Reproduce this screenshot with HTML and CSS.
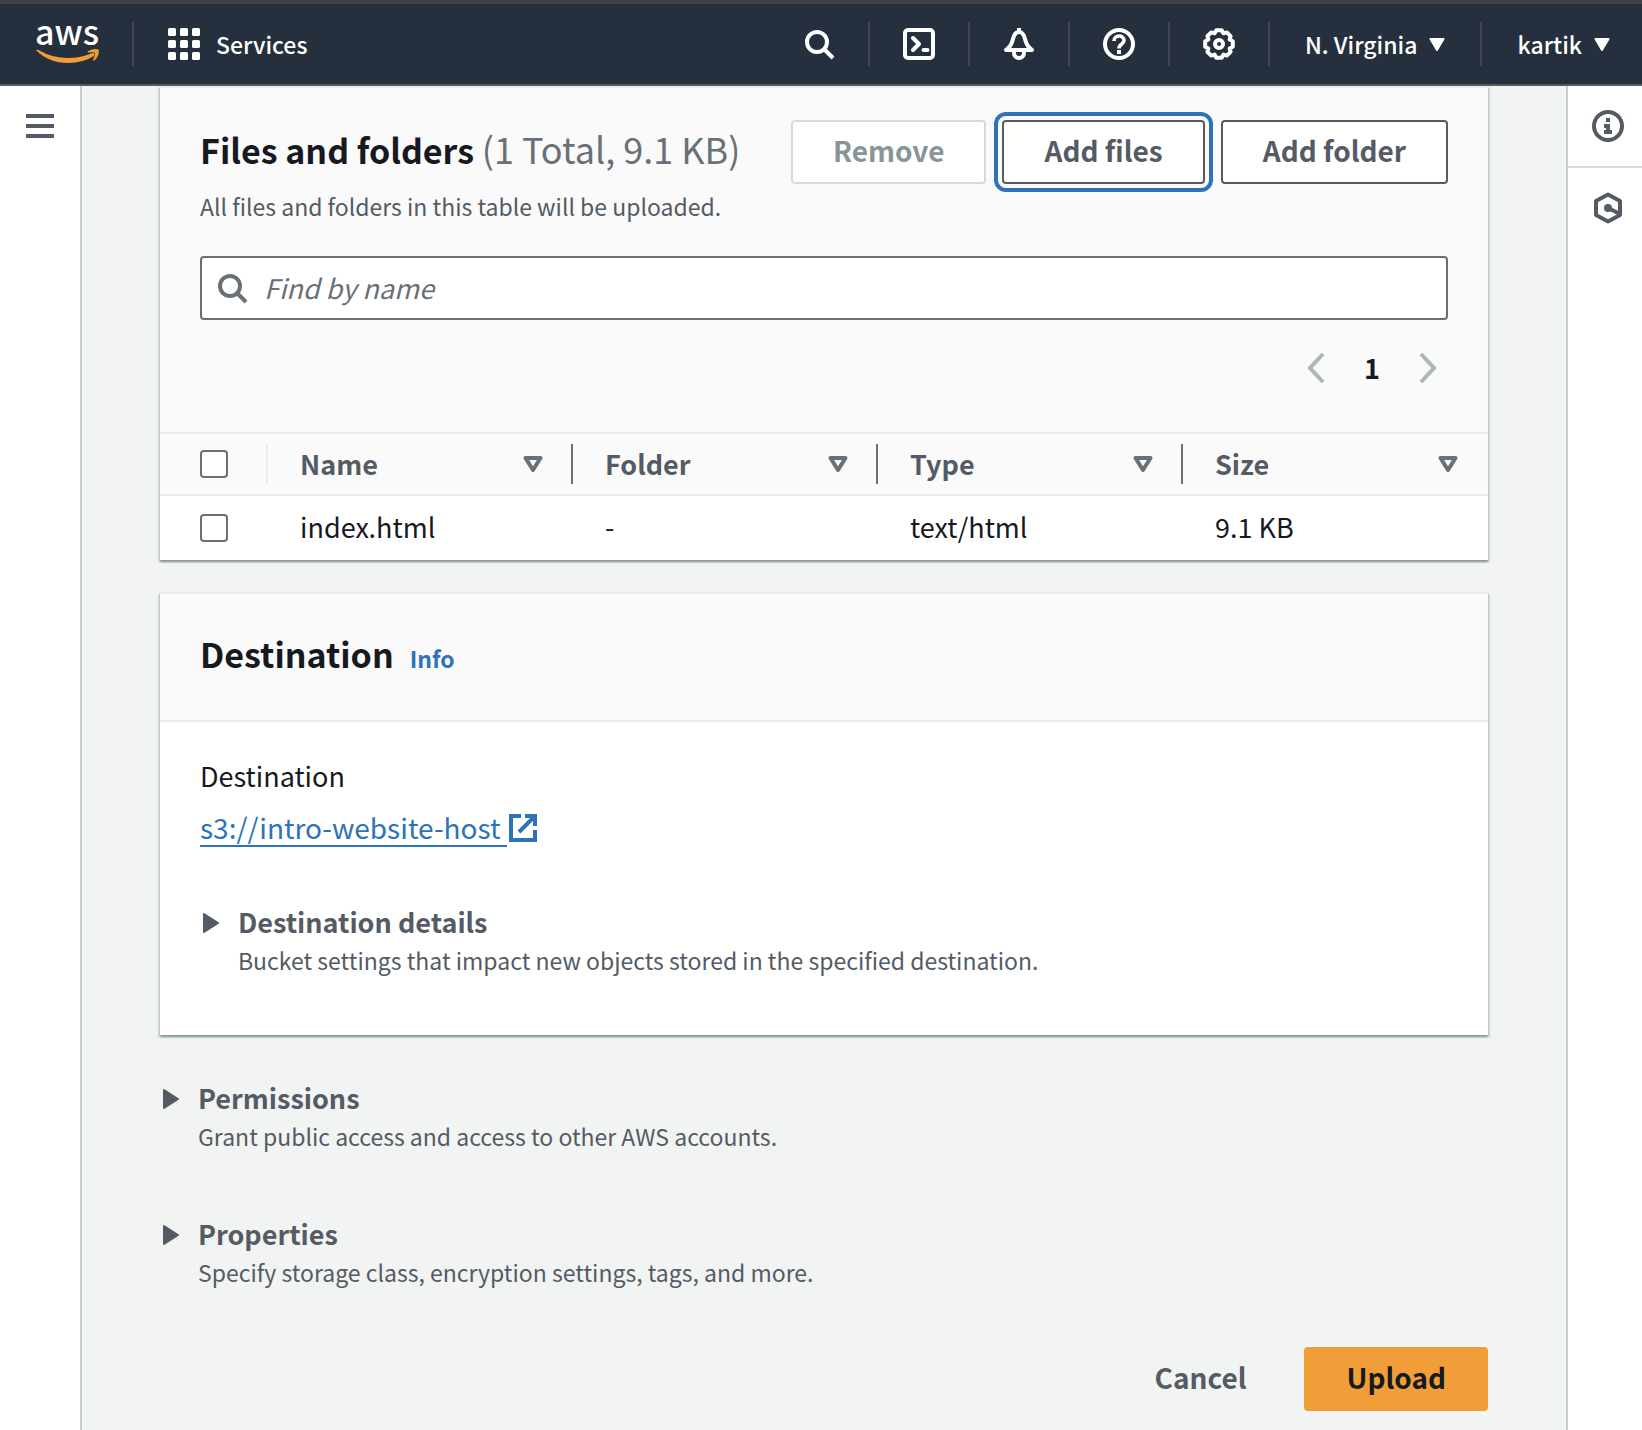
FILE: index.html
```html
<!DOCTYPE html>
<html lang="en">
<head>
<meta charset="utf-8">
<meta name="viewport" content="width=device-width, initial-scale=1">
<title>Upload objects - S3</title>
<link rel="stylesheet" href="styles.css">
</head>
<body>
<header class="topbar">
  <a class="logo" href="#" aria-label="AWS home">
    <svg width="64" height="80" viewBox="0 -18 64 80">
      <text class="logo-text" x="31" y="23" text-anchor="middle">aws</text>
      <path fill="#f19e38" d="M0 28.200Q1 27.200 2.500 28Q16 36 32 36Q44 36 55 31.500Q58 30.500 58.500 32Q59 33 57 34.500Q47 41 32 41Q13 41 0 28.200Z"/>
      <path fill="#f19e38" d="M51.500 29.500Q56 26 62 27.200Q63.500 28 62.500 32Q61 37 57.500 39Q56.500 38.500 58 35.500Q59.500 31.500 59 30.800Q58 29.800 52 30.500Z"/>
    </svg>
  </a>
  <span class="divider"></span>
  <button class="services" type="button">
    <svg width="32" height="32" viewBox="0 0 32 32" fill="#fff">
      <rect width="8" height="8" rx="1.500"/><rect x="12" width="8" height="8" rx="1.500"/><rect x="24" width="8" height="8" rx="1.500"/>
      <rect y="12" width="8" height="8" rx="1.500"/><rect x="12" y="12" width="8" height="8" rx="1.500"/><rect x="24" y="12" width="8" height="8" rx="1.500"/>
      <rect y="24" width="8" height="8" rx="1.500"/><rect x="12" y="24" width="8" height="8" rx="1.500"/><rect x="24" y="24" width="8" height="8" rx="1.500"/>
    </svg>
    <span>Services</span>
  </button>
  <nav class="tools" aria-label="Console tools">
    <button class="tool" type="button" aria-label="Search">
      <svg width="32" height="32" viewBox="0 0 32 32" fill="none" stroke="#fff" stroke-width="4"><circle cx="14" cy="14" r="10"/><path d="M21 21L30 30"/></svg>
    </button>
    <span class="divider"></span>
    <button class="tool" type="button" aria-label="CloudShell">
      <svg width="32" height="32" viewBox="0 0 32 32" fill="none" stroke="#fff" stroke-width="4"><rect x="2" y="2" width="28" height="28" rx="3"/><path d="M10 10L16 16L10 22M20.500 22H24.500" stroke-linecap="round" stroke-linejoin="round"/></svg>
    </button>
    <span class="divider"></span>
    <button class="tool" type="button" aria-label="Notifications">
      <svg width="32" height="32" viewBox="0 0 32 32" fill="none" stroke="#fff" stroke-width="4"><path d="M3 22H29C24.500 19 23 15.500 22 11C21 6.500 19 4 16 4C13 4 11 6.500 10 11C9 15.500 7.500 19 3 22Z" stroke-linejoin="round"/><path d="M16 0V4M11 23V25A5 5 0 0 0 21 25V23"/></svg>
    </button>
    <span class="divider"></span>
    <button class="tool" type="button" aria-label="Help">
      <svg width="32" height="32" viewBox="0 0 32 32" fill="none" stroke="#fff" stroke-width="4"><circle cx="16" cy="16" r="14"/><path d="M11 13C11 6.500 21 6.500 21 12.500C21 16.500 16 15.500 16 20.500" stroke-width="3.600"/><path d="M16 22V26"/></svg>
    </button>
    <span class="divider"></span>
    <button class="tool" type="button" aria-label="Settings">
      <svg width="32" height="32" viewBox="0 0 32 32" fill="none" stroke="#fff" stroke-width="4" stroke-linejoin="round"><path d="M13.300 2.200H18.700L20.400 5.400L23.800 4.400L27.600 8.200L26.600 11.600L29.800 13.300V18.700L26.600 20.400L27.600 23.800L23.800 27.600L20.400 26.600L18.700 29.800H13.300L11.600 26.600L8.200 27.600L4.400 23.800L5.400 20.400L2.200 18.700V13.300L5.400 11.600L4.400 8.200L8.200 4.400L11.600 5.400Z"/><circle cx="16" cy="16" r="4"/></svg>
    </button>
    <span class="divider"></span>
    <button class="menu" type="button">N. Virginia
      <svg width="16" height="14" viewBox="0 -1 16 14"><path d="M1.500 1H14.500L8 12Z" fill="#fff" stroke="#fff" stroke-width="2" stroke-linejoin="round"/></svg>
    </button>
    <span class="divider"></span>
    <button class="menu" type="button">kartik
      <svg width="16" height="14" viewBox="0 -1 16 14"><path d="M1.500 1H14.500L8 12Z" fill="#fff" stroke="#fff" stroke-width="2" stroke-linejoin="round"/></svg>
    </button>
  </nav>
</header>

<div class="shell">
  <aside class="rail rail-left">
    <button class="rail-button" type="button" aria-label="Open navigation">
      <svg width="28" height="24" viewBox="0 0 28 24" fill="#545b64"><path d="M0 0H28V4H0ZM0 10H28V14H0ZM0 20H28V24H0Z"/></svg>
    </button>
  </aside>

  <main class="content">
    <section class="card">
      <div class="card-header files-header">
        <div class="title-row">
          <div>
            <h2>Files and folders <span class="counter">(1 Total, 9.1 KB)</span></h2>
            <p class="description">All files and folders in this table will be uploaded.</p>
          </div>
          <div class="actions">
            <button class="button" type="button" disabled>Remove</button>
            <button class="button button-focused" type="button">Add files</button>
            <button class="button" type="button">Add folder</button>
          </div>
        </div>
        <div class="search">
          <svg width="32" height="32" viewBox="0 0 32 32" fill="none" stroke="#687078" stroke-width="4"><circle cx="14" cy="14" r="10"/><path d="M21 21L30 30"/></svg>
          <input type="search" placeholder="Find by name" aria-label="Find by name">
        </div>
        <div class="pagination">
          <button type="button" aria-label="Previous page"><svg width="20" height="32" viewBox="0 0 20 32" fill="none" stroke="#aab7b8" stroke-width="4"><path d="M17 2L4 16L17 30"/></svg></button>
          <button class="page" type="button">1</button>
          <button type="button" aria-label="Next page"><svg width="20" height="32" viewBox="0 0 20 32" fill="none" stroke="#aab7b8" stroke-width="4"><path d="M3 2L16 16L3 30"/></svg></button>
        </div>
      </div>
      <table class="files">
        <thead>
          <tr>
            <th class="select"><input type="checkbox" aria-label="Select all"></th>
            <th><div class="column">Name <svg width="20" height="16" viewBox="0 0 20 16"><path d="M2.500 2H17.500L10 14Z" fill="none" stroke="#687078" stroke-width="4" stroke-linejoin="round"/></svg></div></th>
            <th><div class="column">Folder <svg width="20" height="16" viewBox="0 0 20 16"><path d="M2.500 2H17.500L10 14Z" fill="none" stroke="#687078" stroke-width="4" stroke-linejoin="round"/></svg></div></th>
            <th><div class="column">Type <svg width="20" height="16" viewBox="0 0 20 16"><path d="M2.500 2H17.500L10 14Z" fill="none" stroke="#687078" stroke-width="4" stroke-linejoin="round"/></svg></div></th>
            <th><div class="column">Size <svg width="20" height="16" viewBox="0 0 20 16"><path d="M2.500 2H17.500L10 14Z" fill="none" stroke="#687078" stroke-width="4" stroke-linejoin="round"/></svg></div></th>
          </tr>
        </thead>
        <tbody>
          <tr>
            <td class="select"><input type="checkbox" aria-label="Select index.html"></td>
            <td>index.html</td>
            <td>-</td>
            <td>text/html</td>
            <td>9.1 KB</td>
          </tr>
        </tbody>
      </table>
    </section>

    <section class="card">
      <div class="card-header destination-header">
        <h2>Destination</h2>
        <a class="info" href="#">Info</a>
      </div>
      <div class="destination-body">
        <p class="label">Destination</p>
        <p class="bucket"><a href="#"><span class="bucket-name">s3://intro-website-host&nbsp;</span><svg width="28" height="28" viewBox="0 0 28 28" fill="none" stroke="#2e73b8" stroke-width="4"><path d="M12 2H2V26H26V16"/><path d="M16 2H26V12M25 3L10 18"/></svg></a></p>
        <div class="expander">
          <svg width="20" height="20" viewBox="0 0 20 20"><path d="M4 1L18 10L4 19Z" fill="#545b64" stroke="#545b64" stroke-width="2" stroke-linejoin="round"/></svg>
          <div>
            <h3>Destination details</h3>
            <p class="description">Bucket settings that impact new objects stored in the specified destination.</p>
          </div>
        </div>
      </div>
    </section>

    <section class="expander">
      <svg width="20" height="20" viewBox="0 0 20 20"><path d="M4 1L18 10L4 19Z" fill="#545b64" stroke="#545b64" stroke-width="2" stroke-linejoin="round"/></svg>
      <div>
        <h3>Permissions</h3>
        <p class="description">Grant public access and access to other AWS accounts.</p>
      </div>
    </section>
    <section class="expander">
      <svg width="20" height="20" viewBox="0 0 20 20"><path d="M4 1L18 10L4 19Z" fill="#545b64" stroke="#545b64" stroke-width="2" stroke-linejoin="round"/></svg>
      <div>
        <h3>Properties</h3>
        <p class="description">Specify storage class, encryption settings, tags, and more.</p>
      </div>
    </section>

    <div class="form-actions">
      <button class="button button-link" type="button">Cancel</button>
      <button class="button button-primary" type="button">Upload</button>
    </div>
  </main>

  <aside class="rail rail-right">
    <button class="rail-button" type="button" aria-label="Info panel">
      <svg width="32" height="32" viewBox="0 0 32 32"><circle cx="16" cy="16" r="14" fill="none" stroke="#545b64" stroke-width="4"/><path fill="#545b64" d="M14 8H18V12H14ZM12 14H18V20H20V24H12V20H14V18H12Z"/></svg>
    </button>
    <button class="rail-button" type="button" aria-label="Resource panel">
      <svg width="32" height="32" viewBox="0 0 32 32" fill="none" stroke="#545b64" stroke-width="4"><path d="M16 2.500L28 9V23L16 29.500L4 23V9Z" stroke-linejoin="round"/><path d="M16 16L28 22"/><circle cx="16" cy="16" r="4" fill="#545b64" stroke="none"/></svg>
    </button>
  </aside>
</div>
</body>
</html>
```
FILE: styles.css
```css
* {
  box-sizing: border-box;
}

body {
  margin: 0;
  min-height: 100vh;
  display: flex;
  flex-direction: column;
  background: #f2f3f3;
  color: #16191f;
  font-family: "Noto Sans CJK SC", "Noto Sans", sans-serif;
  font-size: 27px;
  line-height: 40px;
}

h2,
h3,
p {
  margin: 0;
}

svg {
  display: block;
  flex: none;
}

button {
  margin: 0;
  padding: 0;
  border: 0;
  background: none;
  color: inherit;
  font: inherit;
}

/* Top navigation */
.topbar {
  display: flex;
  align-items: center;
  height: 86px;
  border-top: 4px solid #424044;
  border-bottom: 2px solid #545b64;
  background: #252f3e;
  color: #fff;
  font-size: 23px;
  font-weight: 500;
}

.logo {
  margin: 0 32px 0 36px;
}

.logo-text {
  fill: #fff;
  font-size: 34px;
  font-weight: 500;
}

.divider {
  width: 2px;
  height: 44px;
  background: #424750;
}

.services {
  display: flex;
  align-items: center;
  gap: 16px;
  margin-left: 34px;
}

.tools {
  display: flex;
  align-items: center;
  margin-left: auto;
}

.tool {
  display: grid;
  place-items: center;
  width: 98px;
  height: 64px;
}

.menu {
  display: flex;
  align-items: center;
  gap: 12px;
  padding: 0 35px;
}

.menu:last-child {
  padding-right: 32px;
}

/* Page frame */
.shell {
  display: flex;
  flex: 1;
}

.rail {
  flex: none;
  background: #fff;
}

.rail-left {
  width: 82px;
  border-right: 2px solid #c8cdce;
}

.rail-right {
  width: 76px;
  border-left: 2px solid #c8cdce;
}

.rail-button {
  display: grid;
  place-items: center;
  width: 100%;
  height: 80px;
}

.rail-right .rail-button {
  padding-left: 6px;
}

.rail-right .rail-button + .rail-button {
  height: 82px;
  border-top: 2px solid #d5dbdb;
}

.content {
  display: flex;
  flex: 1;
  flex-direction: column;
  min-width: 0;
  padding: 0 78px 20px;
}

/* Cards */
.card {
  margin-bottom: 32px;
  border-top: 2px solid #eaeded;
  background: #fff;
  box-shadow: 0 2px 2px #879596, 2px 2px 2px #d5dbdb, -2px 2px 2px #d5dbdb;
}

.card-header {
  padding: 0 40px;
  border-bottom: 2px solid #eaeded;
  background: #fafafa;
}

h2 {
  font-size: 34px;
  line-height: 44px;
}

.counter {
  color: #687078;
  font-size: 36px;
  font-weight: 400;
}

.description {
  color: #545b64;
  font-size: 23px;
  line-height: 36px;
}

.title-row {
  display: flex;
  justify-content: space-between;
  height: 168px;
  padding-top: 32px;
}

.title-row h2 {
  margin: 6px 0 16px;
}

.actions {
  display: flex;
  align-items: flex-start;
  gap: 16px;
}

.button {
  height: 64px;
  padding: 0 40px 4px;
  border: 2px solid #545b64;
  border-radius: 4px;
  background: #fff;
  color: #545b64;
  font-size: 28px;
  font-weight: 700;
}

.button:disabled {
  border-color: #d5dbdb;
  color: #879596;
}

.button-focused {
  outline: 4px solid #2e73b8;
  outline-offset: 4px;
}

.search {
  display: flex;
  align-items: center;
  gap: 16px;
  height: 64px;
  padding: 0 14px;
  border: 2px solid #687078;
  border-radius: 4px;
  background: #fff;
}

.search input {
  flex: 1;
  min-width: 0;
  padding: 0;
  border: 0;
  outline: 0;
  background: none;
  color: inherit;
  font: inherit;
}

.search input::placeholder {
  color: #687078;
  font-style: italic;
  opacity: 1;
}

.pagination {
  display: flex;
  align-items: center;
  justify-content: flex-end;
  gap: 38px;
  padding: 28px 10px 44px;
}

.page {
  font-weight: 700;
}

/* Files table */
.files {
  width: 100%;
  border-spacing: 0;
  table-layout: fixed;
}

.files th,
.files td {
  padding: 0 0 0 32px;
  text-align: left;
}

.files .select {
  width: 108px;
  padding-left: 40px;
}

.files th {
  height: 62px;
  border-bottom: 2px solid #eaeded;
  background: linear-gradient(#687078, #687078) right center / 2px 40px no-repeat #fafafa;
  color: #545b64;
}

.files th:last-child {
  background: #fafafa;
}

.files th.select {
  background-image: linear-gradient(#eaeded, #eaeded);
}

.files td {
  height: 64px;
  padding-bottom: 2px;
}

.files td.select {
  padding-bottom: 0;
}

.column {
  display: flex;
  align-items: center;
  justify-content: space-between;
  padding-right: 30px;
}

input[type="checkbox"] {
  display: block;
  appearance: none;
  width: 28px;
  height: 28px;
  margin: 0;
  border: 2px solid #687078;
  border-radius: 4px;
  background: #fff;
}

/* Destination */
.destination-header {
  display: flex;
  align-items: baseline;
  gap: 16px;
  padding: 38px 40px 42px;
}

.info {
  color: #2e73b8;
  font-size: 23px;
  font-weight: 700;
  text-decoration: none;
}

.destination-body {
  padding: 34px 40px 42px;
}

.bucket {
  margin: 12px 0 54px;
}

.bucket a {
  display: inline-flex;
  align-items: center;
  gap: 2px;
  color: #2e73b8;
  font-size: 28px;
  text-decoration: none;
}

.bucket-name {
  line-height: 36px;
  border-bottom: 2px solid #2e73b8;
}

.expander {
  display: flex;
  gap: 18px;
  padding-bottom: 15px;
  color: #545b64;
}

.expander > svg {
  margin-top: 11px;
}

h3 {
  font-size: 27px;
  line-height: 40px;
}

.content > .expander {
  padding: 11px 0 49px;
}

.form-actions {
  display: flex;
  justify-content: flex-end;
  gap: 16px;
  margin-top: 8px;
}

.button-link {
  border-color: transparent;
  background: none;
}

.button-primary {
  border-color: #f19e38;
  background: #f19e38;
  color: #16191f;
}
```
